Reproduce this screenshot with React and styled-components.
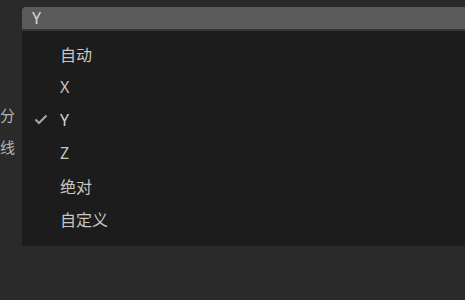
import React from 'react';
import styled, { createGlobalStyle } from 'styled-components';

const GlobalStyle = createGlobalStyle`
  html, body {
    margin: 0;
    padding: 0;
    background: #2a2a2a;
    font-family: "Noto Sans", "Noto Sans CJK SC", sans-serif;
  }
`;

const Page = styled.div`
  position: relative;
  width: 465px;
  height: 300px;
  overflow: hidden;
  background: #2a2a2a;
`;

const LabelColumn = styled.div`
  display: flex;
  flex-direction: column;
  align-items: flex-end;
  width: 15px;
  padding-top: 103px;
`;

const Label = styled.div`
  height: 32px;
  line-height: 24px;
  font-size: 15px;
  color: #b4b4b4;
  white-space: nowrap;
`;

const Select = styled.div`
  position: absolute;
  left: 22px;
  top: 7px;
  width: 460px;
  display: flex;
  flex-direction: column;
`;

const SelectHeader = styled.div`
  height: 22px;
  background: #5b5b5b;
  border-radius: 4px 4px 0 0;
  border-bottom: 2px solid #353535;
  padding-left: 10px;
  display: flex;
  align-items: center;
  font-size: 16px;
  color: #d8d8d8;
`;

const Menu = styled.ul`
  list-style: none;
  margin: 0;
  padding: 6px 0 11px;
  background: #1c1c1c;
`;

const Item = styled.li`
  height: 33px;
  display: flex;
  align-items: center;
  font-size: 16px;
  color: ${(p) => (p.$selected ? '#d2d2d2' : '#c6c6c6')};
`;

const CheckSlot = styled.span`
  width: 38px;
  display: flex;
  justify-content: flex-end;
  svg {
    margin-right: 12px;
  }
`;

const Check = () => (
  <svg width="14" height="11" viewBox="0 0 14 11">
    <polyline
      points="1.5,5.5 5,9 12.5,1.5"
      fill="none"
      stroke="#a8a8a8"
      strokeWidth="2"
    />
  </svg>
);

const options = ['自动', 'X', 'Y', 'Z', '绝对', '自定义'];

export default function App() {
  const selected = 'Y';
  return (
    <Page>
      <GlobalStyle />
      <LabelColumn>
        <Label>分</Label>
        <Label>线</Label>
      </LabelColumn>
      <Select>
        <SelectHeader>{selected}</SelectHeader>
        <Menu>
          {options.map((o) => (
            <Item key={o} $selected={o === selected}>
              <CheckSlot>{o === selected && <Check />}</CheckSlot>
              {o}
            </Item>
          ))}
        </Menu>
      </Select>
    </Page>
  );
}
